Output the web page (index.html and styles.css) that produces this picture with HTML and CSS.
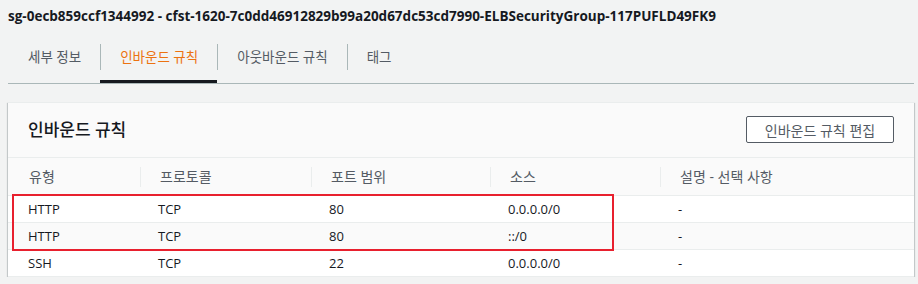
FILE: index.html
```html
<!DOCTYPE html>
<html lang="ko">
<head>
  <meta charset="UTF-8" />
  <title>보안 그룹</title>
  <link rel="stylesheet" href="styles.css">
</head>
<body>
  <h1 class="sg-title">sg-0ecb859ccf1344992 - cfst-1620-7c0dd46912829b99a20d67dc53cd7990-ELBSecurityGroup-117PUFLD49FK9</h1>

  <div class="tabs">
    <div class="tab"><span class="tab-label first">세부 정보</span></div>
    <div class="tab active"><span class="tab-label">인바운드 규칙</span></div>
    <div class="tab"><span class="tab-label">아웃바운드 규칙</span></div>
    <div class="tab"><span class="tab-label">태그</span></div>
  </div>

  <div class="panel">
    <div class="panel-header">
      <h2>인바운드 규칙</h2>
      <button class="edit-btn">인바운드 규칙 편집</button>
    </div>

    <table class="rules">
      <thead>
        <tr>
          <th class="c1"><span>유형</span></th>
          <th class="c2"><span>프로토콜</span></th>
          <th class="c3"><span>포트 범위</span></th>
          <th class="c4"><span>소스</span></th>
          <th class="c5"><span>설명 - 선택 사항</span></th>
        </tr>
      </thead>
      <tbody>
        <tr>
          <td>HTTP</td>
          <td>TCP</td>
          <td>80</td>
          <td>0.0.0.0/0</td>
          <td>-</td>
        </tr>
        <tr class="alt">
          <td>HTTP</td>
          <td>TCP</td>
          <td>80</td>
          <td>::/0</td>
          <td>-</td>
        </tr>
        <tr>
          <td>SSH</td>
          <td>TCP</td>
          <td>22</td>
          <td>0.0.0.0/0</td>
          <td>-</td>
        </tr>
      </tbody>
    </table>

    <div class="highlight"></div>
  </div>
</body>
</html>
```

FILE: styles.css
```css
body {
  margin: 0;
  padding: 0 4px 0 8px;
  background: #f2f3f3;
  font-family: 'Open Sans', 'Noto Sans CJK KR', sans-serif;
  color: #16191f;
}
.sg-title {
  margin: 0;
  padding-top: 6px;
  font-size: 13.5px;
  line-height: 20px;
  font-weight: 700;
}

/* tabs */
.tabs {
  display: flex;
  margin-top: 9px;
  border-bottom: 1px solid #aab7b8;
}
.tab {
  padding-top: 9px;
  padding-bottom: 10px;
  border-bottom: 3px solid transparent;
  font-size: 13.5px;
  color: #545b64;
}
.tab.active {
  color: #ec7211;
  border-bottom-color: #16191f;
}
.tab-label {
  display: block;
  height: 26px;
  line-height: 26px;
  padding: 0 19px 0 19px;
  border-left: 1px solid #aab7b8;
}
.tab-label.first {
  border-left-color: transparent;
}

/* panel */
.panel {
  position: relative;
  margin-top: 18px;
  background: #fff;
  border-top: 1px solid #eaeded;
  box-shadow: 0 1px 1px 0 rgba(0, 28, 36, 0.3), 1px 1px 1px 0 rgba(0, 28, 36, 0.15), -1px 1px 1px 0 rgba(0, 28, 36, 0.15);
}
.panel-header {
  display: flex;
  justify-content: space-between;
  align-items: center;
  padding: 13px 20px 14px 20px;
  background: #fafafa;
  border-bottom: 1px solid #eaeded;
}
.panel-header h2 {
  margin: 0;
  font-size: 17px;
  font-weight: 500;
  line-height: 27px;
}
.edit-btn {
  height: 27px;
  width: 148px;
  padding: 0;
  background: #fff;
  border: 1px solid #545b64;
  border-radius: 2px;
  font-family: inherit;
  font-size: 14px;
  color: #545b64;
}

/* table */
.rules {
  width: 100%;
  border-collapse: collapse;
  font-size: 13px;
  table-layout: fixed;
}
.rules th {
  background: #fafafa;
  font-size: 14px;
  font-weight: 400;
  color: #545b64;
  text-align: left;
  padding: 9px 0 8px 0;
  border-bottom: 1px solid #eaeded;
}
.rules th span {
  display: block;
  height: 20px;
  line-height: 20px;
  padding-left: 19px;
  border-left: 1px solid #eaeded;
}
.rules th.c1 span {
  border-left-color: transparent;
  padding-left: 20px;
}
.c1 { width: 132px; }
.c2 { width: 171px; }
.c3 { width: 179px; }
.c4 { width: 170px; }
.rules td {
  height: 26px;
  padding: 0 0 0 18px;
  border-bottom: 1px solid #eaeded;
  line-height: 26px;
}
.rules td:first-child {
  padding-left: 20px;
}
.rules tr.alt td {
  background: #fafafa;
}

/* annotation box over the first two rows */
.highlight {
  position: absolute;
  left: 4px;
  top: 91px;
  width: 598px;
  height: 53px;
  border: 2px solid #e8202e;
}
```
